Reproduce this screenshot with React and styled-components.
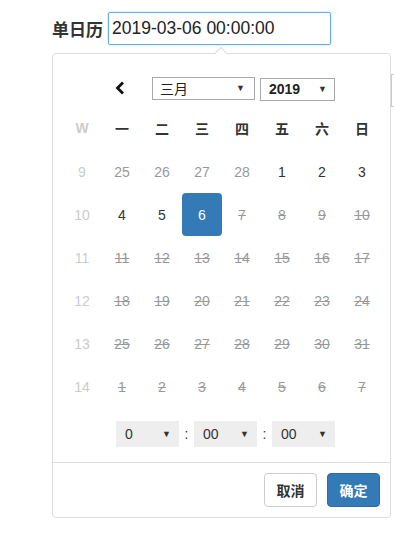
import React from "react";
import styled, { createGlobalStyle } from "styled-components";

const GlobalStyle = createGlobalStyle`
  html, body {
    margin: 0;
    padding: 0;
    overflow: hidden;
    background: #fff;
    font-family: "Liberation Sans", Arial, "Noto Sans CJK SC", sans-serif;
    color: #333;
  }
`;

const Page = styled.div`
  padding: 12px 0 0 52px;
`;

const FieldRow = styled.div`
  display: flex;
  align-items: center;
  gap: 4px;
`;

const Label = styled.span`
  font-size: 17px;
  font-weight: 700;
  color: #333;
  width: 52px;
  white-space: nowrap;
`;

const DateInput = styled.div`
  box-sizing: border-box;
  width: 223px;
  height: 33px;
  border: 1px solid #66afe9;
  border-radius: 2px;
  box-shadow: 0 0 2px rgba(102, 175, 233, 0.6);
  padding-left: 3px;
  display: flex;
  align-items: center;
  font-size: 17.5px;
  color: #222;
`;

const Popup = styled.div`
  position: relative;
  box-sizing: border-box;
  margin-top: 8px;
  width: 339px;
  border: 1px solid #ddd;
  border-radius: 4px;
  background: #fff;

  &::before,
  &::after {
    content: "";
    position: absolute;
    left: 161px;
    border: 7px solid transparent;
    border-top: 0;
  }
  &::before {
    top: -7px;
    border-bottom-color: #ccc;
  }
  &::after {
    top: -6px;
    border-bottom-color: #fff;
  }
`;

const Header = styled.div`
  display: flex;
  align-items: center;
  height: 32px;
  padding: 18px 0 0 55px;
  & > * {
    flex-shrink: 0;
  }
`;

const PrevButton = styled.button`
  width: 24px;
  height: 24px;
  padding: 0;
  border: 0;
  background: transparent;
  display: flex;
  align-items: center;
  justify-content: center;
  margin-right: 20px;
  cursor: pointer;
`;

const SelectBox = styled.div`
  box-sizing: border-box;
  display: flex;
  align-items: center;
  justify-content: space-between;
  width: ${(p) => p.$width}px;
  height: 23px;
  margin-top: ${(p) => p.$offset || 0}px;
  padding: 0 ${(p) => p.$pr}px 0 ${(p) => p.$pl}px;
  border: 1px solid #a9a9a9;
  background: #fff;
  font-size: 14px;
  font-weight: ${(p) => (p.$bold ? 700 : 400)};
  color: #222;
  & + & {
    margin-left: 5px;
  }
`;

const Caret = styled.span`
  font-size: 9px;
  color: #333;
  line-height: 1;
`;

/* the edge of a neighbouring control, cut off by the window */
const NextBox = styled.div`
  box-sizing: border-box;
  width: 5px;
  height: 33px;
  margin: 4px 0 0 56px;
  border: 1px solid #ccc;
  border-right: 0;
  display: flex;
  align-items: center;
  padding-left: 3px;
`;

const NextMark = styled.span`
  width: 1px;
  height: 3px;
  background: #6b3a2a;
`;

const Grid = styled.div`
  display: grid;
  grid-template-columns: repeat(8, 40px);
  grid-template-rows: 44px repeat(6, 43px);
  margin: 2px 0 0 9px;
`;

const HeadCell = styled.div`
  display: flex;
  align-items: center;
  justify-content: center;
  font-size: 14px;
  font-weight: 700;
  color: ${(p) => (p.$week ? "#ccc" : "#333")};
`;

const dayColors = {
  week: "#ccc",
  prev: "#999",
  cur: "#333",
  off: "#999",
  sel: "#fff",
};

const DayCell = styled.div`
  display: flex;
  align-items: center;
  justify-content: center;
  font-size: 14px;
  border-radius: 4px;
  color: ${(p) => dayColors[p.$kind]};
  background: ${(p) => (p.$kind === "sel" ? "#337ab7" : "transparent")};
  text-decoration: ${(p) => (p.$kind === "off" ? "line-through" : "none")};
`;

const TimeRow = styled.div`
  display: flex;
  align-items: center;
  padding: 13px 0 15px 63px;
`;

const TimeSelect = styled.div`
  box-sizing: border-box;
  width: 63px;
  height: 26px;
  display: flex;
  align-items: center;
  justify-content: space-between;
  padding: 0 8px 0 9px;
  background: #eee;
  font-size: 14px;
  color: #333;
`;

const Colon = styled.span`
  width: 15px;
  text-align: center;
  font-size: 14px;
  color: #333;
`;

const Footer = styled.div`
  display: flex;
  justify-content: flex-end;
  gap: 10px;
  padding: 10px 10px 10px 0;
  border-top: 1px solid #ddd;
`;

const Button = styled.button`
  box-sizing: border-box;
  width: 53px;
  height: 34px;
  padding: 0;
  border-radius: 4px;
  border: 1px solid ${(p) => (p.$primary ? "#2e6da4" : "#ccc")};
  background: ${(p) => (p.$primary ? "#337ab7" : "#fff")};
  color: ${(p) => (p.$primary ? "#fff" : "#333")};
  font-family: inherit;
  font-size: 14px;
  font-weight: 700;
  cursor: pointer;
`;

const weekdays = ["一", "二", "三", "四", "五", "六", "日"];

const off = (nums) => nums.map((n) => [n, "off"]);

const weeks = [
  [9, [[25, "prev"], [26, "prev"], [27, "prev"], [28, "prev"], [1, "cur"], [2, "cur"], [3, "cur"]]],
  [10, [[4, "cur"], [5, "cur"], [6, "sel"], ...off([7, 8, 9, 10])]],
  [11, off([11, 12, 13, 14, 15, 16, 17])],
  [12, off([18, 19, 20, 21, 22, 23, 24])],
  [13, off([25, 26, 27, 28, 29, 30, 31])],
  [14, off([1, 2, 3, 4, 5, 6, 7])],
];

const ChevronLeft = () => (
  <svg width="12" height="14" viewBox="0 0 12 14">
    <path d="M9 1.5 L3.5 7 L9 12.5" fill="none" stroke="#111" strokeWidth="2.8" strokeLinejoin="miter" />
  </svg>
);

export default function App() {
  return (
    <Page>
      <GlobalStyle />
      <FieldRow>
        <Label>单日历</Label>
        <DateInput>2019-03-06 00:00:00</DateInput>
      </FieldRow>
      <Popup>
        <Header>
          <PrevButton aria-label="上一月">
            <ChevronLeft />
          </PrevButton>
          <SelectBox $width={103} $pl={7} $pr={9}>
            三月
            <Caret>▼</Caret>
          </SelectBox>
          <SelectBox $width={75} $pl={8} $pr={7} $bold $offset={2}>
            2019
            <Caret>▼</Caret>
          </SelectBox>
          <NextBox>
            <NextMark />
          </NextBox>
        </Header>
        <Grid>
          <HeadCell $week>W</HeadCell>
          {weekdays.map((d) => (
            <HeadCell key={d}>{d}</HeadCell>
          ))}
          {weeks.map(([wk, days]) => (
            <React.Fragment key={wk}>
              <DayCell $kind="week">{wk}</DayCell>
              {days.map(([n, kind], i) => (
                <DayCell key={i} $kind={kind}>
                  {n}
                </DayCell>
              ))}
            </React.Fragment>
          ))}
        </Grid>
        <TimeRow>
          <TimeSelect>
            0<Caret>▼</Caret>
          </TimeSelect>
          <Colon>:</Colon>
          <TimeSelect>
            00<Caret>▼</Caret>
          </TimeSelect>
          <Colon>:</Colon>
          <TimeSelect>
            00<Caret>▼</Caret>
          </TimeSelect>
        </TimeRow>
        <Footer>
          <Button>取消</Button>
          <Button $primary>确定</Button>
        </Footer>
      </Popup>
    </Page>
  );
}
